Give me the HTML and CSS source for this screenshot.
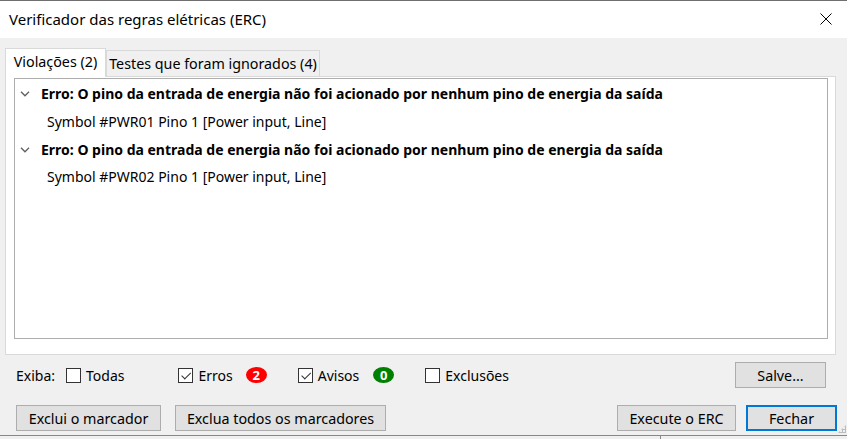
FILE: index.html
```html
<!DOCTYPE html>
<html lang="pt">
<head>
  <meta charset="UTF-8" />
  <title>Verificador das regras elétricas (ERC)</title>
  <link rel="stylesheet" href="styles.css">
</head>
<body>

<div class="window">
  <div class="titlebar">
    <span class="title">Verificador das regras elétricas (ERC)</span>
    <svg class="close" width="12" height="12" viewBox="0 0 12 12">
      <path d="M0.5 0.5 L11.5 11.5 M11.5 0.5 L0.5 11.5" stroke="#000" stroke-width="1" fill="none"/>
    </svg>
  </div>

  <div class="content">
    <div class="tabs">
      <div class="tab active">Violações (2)</div>
      <div class="tab other">Testes que foram ignorados (4)</div>
    </div>

    <div class="panel">
      <div class="list">
        <div class="row head">
          <svg class="chevron" width="10" height="6" viewBox="0 0 10 6">
            <path d="M1 0.8 L5 4.8 L9 0.8" stroke="#606060" stroke-width="1.3" fill="none"/>
          </svg>
          <span>Erro: O pino da entrada de energia não foi acionado por nenhum pino de energia da saída</span>
        </div>
        <div class="row item">Symbol #PWR01 Pino 1 [Power input, Line]</div>
        <div class="row head">
          <svg class="chevron" width="10" height="6" viewBox="0 0 10 6">
            <path d="M1 0.8 L5 4.8 L9 0.8" stroke="#606060" stroke-width="1.3" fill="none"/>
          </svg>
          <span>Erro: O pino da entrada de energia não foi acionado por nenhum pino de energia da saída</span>
        </div>
        <div class="row item">Symbol #PWR02 Pino 1 [Power input, Line]</div>
      </div>
    </div>

    <div class="filters">
      <span class="label">Exiba:</span>
      <label class="check todas"><span class="box"></span>Todas</label>
      <label class="check erros"><span class="box checked"></span>Erros</label>
      <span class="badge red">2</span>
      <label class="check avisos"><span class="box checked"></span>Avisos</label>
      <span class="badge green">0</span>
      <label class="check exclusoes"><span class="box"></span>Exclusões</label>
      <span class="spacer"></span>
      <button class="btn salve">Salve...</button>
    </div>

    <div class="actions">
      <button class="btn excl">Exclui o marcador</button>
      <button class="btn excl-all">Exclua todos os marcadores</button>
      <span class="spacer"></span>
      <button class="btn run">Execute o ERC</button>
      <button class="btn close-btn">Fechar</button>
      <span class="grip"></span>
    </div>
  </div>

  <div class="bottom-strip"><span class="split"></span></div>
</div>

</body>
</html>
```

FILE: styles.css
```css
body {
  margin: 0;
  font-family: "Noto Sans", "Open Sans", sans-serif;
  font-size: 14px;
  color: #000;
  background: #f0f0f0;
}

.window {
  width: 847px;
  height: 439px;
  border-top: 1px solid #6f6f6f;
  box-sizing: border-box;
  display: flex;
  flex-direction: column;
  overflow: hidden;
}

.titlebar {
  height: 37px;
  background: #fff;
  display: flex;
  align-items: center;
  padding: 0 15px 0 9px;
  flex-shrink: 0;
}

.title {
  font-size: 15px;
  flex: 1;
  padding-bottom: 2px;
}

.close {
  margin-top: -1px;
}

.content {
  flex: 1;
  background: #f0f0f0;
  padding: 10px 11px 0 5px;
  position: relative;
}

.tabs {
  display: flex;
  align-items: flex-end;
  height: 28px;
  position: relative;
  z-index: 1;
}

.tab {
  height: 26px;
  line-height: 24px;
  border: 1px solid #d9d9d9;
  border-bottom: none;
  background: #f0f0f0;
  box-sizing: border-box;
  text-align: center;
  font-size: 14.3px;
}

.tab.active {
  width: 101px;
  height: 29px;
  line-height: 26px;
  background: #fff;
  margin-bottom: -1px;
}

.tab.other {
  width: 214px;
  padding-top: 1px;
}

.panel {
  height: 279px;
  background: #fff;
  border: 1px solid #d9d9d9;
  box-sizing: border-box;
  padding: 1px 7px 0 8px;
}

.list {
  height: 261px;
  border: 1px solid #adadad;
  box-sizing: border-box;
  padding-top: 1px;
}

.row {
  height: 27.7px;
  display: flex;
  align-items: center;
  white-space: nowrap;
}

.row.head {
  font-weight: bold;
  padding-left: 5px;
}

.chevron {
  margin-right: 11px;
  margin-top: 1px;
}

.row.item {
  padding-left: 32px;
}

.filters {
  display: flex;
  align-items: center;
  height: 26px;
  margin-top: 7px;
}

.label {
  margin-left: 11px;
  margin-right: 11px;
}

.check {
  display: flex;
  align-items: center;
}

.box {
  width: 13px;
  height: 13px;
  border: 1px solid #333;
  background: #fff;
  margin-right: 5px;
  position: relative;
}

.box.checked::after {
  content: "";
  position: absolute;
  left: 2px;
  top: 1px;
  width: 8px;
  height: 4px;
  border-left: 1px solid #333;
  border-bottom: 1px solid #333;
  transform: rotate(-45deg) translate(-1px, 2px);
}

.todas { margin-right: 54px; }
.erros { margin-right: 13px; }
.avisos { margin-right: 14px; }

.badge {
  width: 21px;
  height: 16px;
  border-radius: 50%;
  color: #fff;
  font-weight: bold;
  font-size: 13px;
  line-height: 16px;
  text-align: center;
}

.badge.red { background: #f00; margin-right: 31px; }
.badge.green { background: #008000; margin-right: 31px; }

.spacer { flex: 1; }

.btn {
  font-family: inherit;
  font-size: 14.3px;
  background: #e1e1e1;
  border: 1px solid #adadad;
  height: 26px;
  padding: 0 10px;
  color: #000;
}

.salve {
  width: 91px;
  margin-right: 10px;
}

.actions {
  display: flex;
  align-items: center;
  margin-top: 17px;
  margin-left: 11px;
  height: 26px;
}

.excl { width: 145px; margin-right: 14px; }
.excl-all { width: 211px; }
.run { width: 119px; margin-right: 10px; }

.close-btn {
  width: 91px;
  border: 2px solid #0078d7;
  margin-right: -1px;
}

.grip {
  position: absolute;
  right: 1px;
  bottom: 2px;
  width: 8px;
  height: 8px;
  background:
    radial-gradient(circle, #bcbcbc 1px, transparent 1.2px) 0 0 / 3px 3px;
  clip-path: polygon(100% 0, 100% 100%, 0 100%);
}

.bottom-strip {
  height: 3px;
  border-top: 1px solid #888;
  background: #f0f0f0;
  position: relative;
  flex-shrink: 0;
}

.split {
  position: absolute;
  left: 660px;
  top: 0;
  width: 1px;
  height: 3px;
  background: #888;
}
```
